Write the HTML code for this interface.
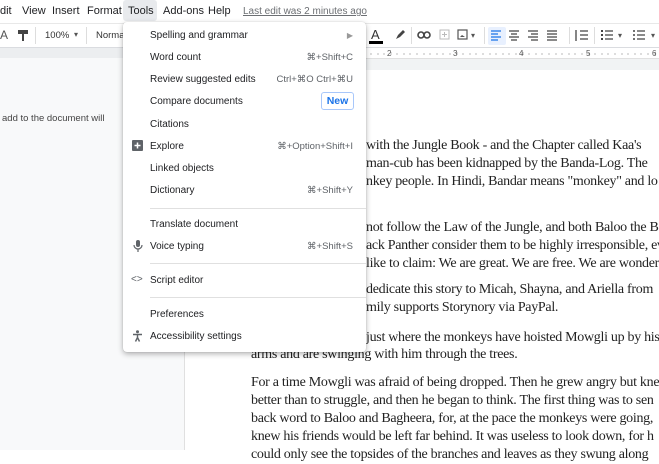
<!DOCTYPE html>
<html><head><meta charset="utf-8"><style>
*{margin:0;padding:0;box-sizing:border-box}
body{width:659px;height:450px;overflow:hidden;background:#fff;font-family:"Liberation Sans",Arial,sans-serif;position:relative;color:#202124}
.a{position:absolute;white-space:nowrap}
.mb{font-size:11px;top:5px}
#left{position:absolute;left:0;top:58px;width:185px;height:392px;background:#f8f9fa;border-right:1px solid #e0e0e0}
#tb{position:absolute;left:0;top:23px;width:659px;height:25px;background:#fff;border-top:1px solid #e8e8e8;border-bottom:1px solid #dadce0}
#band{position:absolute;left:0;top:48px;width:659px;height:10px;background:#eceef0}
#ruler{position:absolute;left:366px;top:48px;width:293px;height:11px;background:#fff;border-bottom:1px solid #e0e0e0;font-size:8px;color:#555}
#rband{position:absolute;left:366px;top:59px;width:293px;height:11px;background:#f1f3f4}
.doc{font-family:"Liberation Serif","Times New Roman",serif;font-size:14px;letter-spacing:-0.3px;color:#222;line-height:18px}
#menu{position:absolute;left:123px;top:22px;width:243px;height:330px;background:#fff;border-radius:4px;box-shadow:0 2px 6px rgba(0,0,0,.3),0 0 1px rgba(0,0,0,.2)}
.mi{position:absolute;left:27px;font-size:10px;color:#202124}
.sc{position:absolute;right:13px;font-size:9.5px;color:#5f6368}
.sep{position:absolute;left:27px;right:0;height:1px;background:#e0e0e0}
.ic{position:absolute;left:8px;color:#5f6368;font-size:11px}
</style></head><body>
<div class="a mb" style="left:0">dit</div>
<div class="a mb" style="left:22px">View</div>
<div class="a mb" style="left:52px">Insert</div>
<div class="a mb" style="left:87px">Format</div>
<div class="a" style="left:123px;top:0;width:34px;height:21px;background:#e8eaed;border-radius:3px"></div>
<div class="a mb" style="left:128px">Tools</div>
<div class="a mb" style="left:163px">Add-ons</div>
<div class="a mb" style="left:208px">Help</div>
<div class="a" style="left:243px;top:6px;font-size:10px;color:#6c6f73;text-decoration:underline">Last edit was 2 minutes ago</div>

<div id="tb"></div>
<div class="a" style="left:0;top:28px;font-size:12px;color:#555">A</div>
<svg class="a" style="left:17px;top:29px" width="12" height="13"><rect x="1" y="1" width="10" height="4" fill="#444"/><rect x="5" y="5" width="2" height="7" fill="#444"/></svg>
<div class="a" style="left:35px;top:27px;width:1px;height:17px;background:#ddd"></div>
<div class="a" style="left:45px;top:30px;font-size:9.5px;color:#333">100%</div>
<div class="a" style="left:74px;top:30px;font-size:8px;color:#555">▾</div>
<div class="a" style="left:86px;top:27px;width:1px;height:17px;background:#ddd"></div>
<div class="a" style="left:96px;top:30px;font-size:9.5px;color:#333">Normal</div>
<div id="band"></div>
<div id="left"></div>
<div class="a" style="left:2px;top:113px;font-size:9.5px;color:#444">add to the document will</div>

<div class="a" style="left:371px;top:27px;font-size:13px;color:#333">A</div>
<div class="a" style="left:369px;top:41px;width:14px;height:3px;background:#000"></div>
<svg class="a" style="left:394px;top:29px" width="12" height="12"><path d="M2 10 L4 6 L9 1 L11 3 L6 8 Z" fill="#444"/></svg>
<div class="a" style="left:411px;top:27px;width:1px;height:17px;background:#ddd"></div>
<svg class="a" style="left:417px;top:30px" width="14" height="10"><rect x="1" y="2" width="6" height="6" rx="3" fill="none" stroke="#444" stroke-width="1.6"/><rect x="7" y="2" width="6" height="6" rx="3" fill="none" stroke="#444" stroke-width="1.6"/></svg>
<svg class="a" style="left:439px;top:29px" width="11" height="11"><rect x="1" y="1" width="9" height="9" fill="none" stroke="#bbb"/><path d="M5.5 3v5M3 5.5h5" stroke="#bbb"/></svg>
<svg class="a" style="left:457px;top:29px" width="11" height="11"><rect x="1" y="1" width="9" height="9" fill="none" stroke="#555" stroke-width="1.2"/><path d="M3 8l2-2 3 2z" fill="#555"/></svg>
<div class="a" style="left:471px;top:31px;font-size:8px;color:#555">▾</div>
<div class="a" style="left:484px;top:27px;width:1px;height:17px;background:#ddd"></div>
<div class="a" style="left:488px;top:27px;width:18px;height:18px;background:#e8f0fe;border-radius:2px"></div>
<svg class="a" style="left:490px;top:29px" width="100" height="13">
<g stroke="#1a73e8" stroke-width="1.3"><path d="M1 2h10M1 5h7M1 8h10M1 11h7"/></g>
<g stroke="#444" stroke-width="1.3"><path d="M19 2h10M21 5h6M19 8h10M21 11h6"/><path d="M38 2h10M41 5h7M38 8h10M41 11h7"/><path d="M57 2h10M57 5h10M57 8h10M57 11h10"/></g></svg>
<div class="a" style="left:569px;top:27px;width:1px;height:17px;background:#ddd"></div>
<svg class="a" style="left:573px;top:29px" width="16" height="13"><g stroke="#444" stroke-width="1.3"><path d="M3 1v11M7 2h8M7 6h8M7 10h8"/></g></svg>
<div class="a" style="left:594px;top:27px;width:1px;height:17px;background:#ddd"></div>
<svg class="a" style="left:600px;top:29px" width="14" height="13"><g stroke="#444" stroke-width="1.3"><path d="M5 2h8M5 6h8M5 10h8"/></g><g fill="#444"><rect x="1" y="1" width="2" height="2"/><rect x="1" y="5" width="2" height="2"/><rect x="1" y="9" width="2" height="2"/></g></svg>
<div class="a" style="left:618px;top:31px;font-size:8px;color:#555">▾</div>
<svg class="a" style="left:632px;top:29px" width="14" height="13"><g stroke="#444" stroke-width="1.3"><path d="M5 2h8M5 6h8M5 10h8"/></g><g fill="#444"><circle cx="2" cy="2" r="1"/><circle cx="2" cy="6" r="1"/><circle cx="2" cy="10" r="1"/></g></svg>
<div class="a" style="left:651px;top:31px;font-size:8px;color:#555">▾</div>

<div id="ruler">
<svg width="293" height="11" style="position:absolute;left:0;top:0"><g stroke="#bbb">
<path d="M5 5v2M12 5v2M18 5v2M25 4v3M31 5v2M38 5v2M44 5v2M51 5v2M58 5v2M64 5v2M71 5v2M77 5v2M84 5v2M91 4v3M97 5v2M104 5v2M110 5v2M117 5v2M124 5v2M130 5v2M137 5v2M143 5v2M150 5v2M157 4v3M163 5v2M170 5v2M176 5v2M183 5v2M190 5v2M196 5v2M203 5v2M209 5v2M216 5v2M223 4v3M229 5v2M236 5v2M242 5v2M249 5v2M256 5v2M262 5v2M269 5v2M275 5v2M282 5v2M289 4v3"/></g></svg>
<span class="a" style="left:21px;top:1px">2</span><span class="a" style="left:87px;top:1px">3</span><span class="a" style="left:153px;top:1px">4</span><span class="a" style="left:220px;top:1px">5</span><span class="a" style="left:286px;top:1px">6</span>
</div>
<div id="rband"></div>

<div class="a doc" style="left:366px;top:137px">with the Jungle Book - and the Chapter called Kaa's</div>
<div class="a doc" style="left:366px;top:155px">man-cub has been kidnapped by the Banda-Log. The</div>
<div class="a doc" style="left:366px;top:173px">nkey people. In Hindi, Bandar means "monkey" and lo</div>
<div class="a doc" style="left:366px;top:219px">not follow the Law of the Jungle, and both Baloo the Be</div>
<div class="a doc" style="left:366px;top:237px">ack Panther consider them to be highly irresponsible, ev</div>
<div class="a doc" style="left:366px;top:255px">like to claim: We are great. We are free. We are wonder</div>
<div class="a doc" style="left:366px;top:281px">dedicate this story to Micah, Shayna, and Ariella from</div>
<div class="a doc" style="left:366px;top:299px">mily supports Storynory via PayPal.</div>
<div class="a doc" style="left:366px;top:329px">just where the monkeys have hoisted Mowgli up by his</div>
<div class="a doc" style="left:251px;top:346px">arms and are swinging with him through the trees.</div>
<div class="a doc" style="left:251px;top:374px">For a time Mowgli was afraid of being dropped. Then he grew angry but kne</div>
<div class="a doc" style="left:251px;top:392px">better than to struggle, and then he began to think. The first thing was to sen</div>
<div class="a doc" style="left:251px;top:410px">back word to Baloo and Bagheera, for, at the pace the monkeys were going, </div>
<div class="a doc" style="left:251px;top:428px">knew his friends would be left far behind. It was useless to look down, for h</div>
<div class="a doc" style="left:251px;top:446px">could only see the topsides of the branches and leaves as they swung along</div>

<div id="menu">
<div class="mi" style="top:8px">Spelling and grammar</div><div class="sc" style="top:9px;font-size:8px;color:#999">▶</div>
<div class="mi" style="top:30px">Word count</div><div class="sc" style="top:30px">⌘+Shift+C</div>
<div class="mi" style="top:52px">Review suggested edits</div><div class="sc" style="top:52px">Ctrl+⌘O Ctrl+⌘U</div>
<div class="mi" style="top:74px">Compare documents</div>
<div class="a" style="right:12px;top:70px;width:33px;height:18px;border:1px solid #a8c7fa;border-radius:3px;color:#1a73e8;font-size:10.5px;font-weight:bold;text-align:center;line-height:16px">New</div>
<div class="mi" style="top:97px">Citations</div>
<svg class="a" style="left:9px;top:118px" width="11" height="11"><rect width="11" height="11" rx="1" fill="#5f6368"/><path d="M5.5 2.5v6M2.5 5.5h6" stroke="#fff" stroke-width="1.5"/></svg>
<div class="mi" style="top:119px">Explore</div><div class="sc" style="top:119px">⌘+Option+Shift+I</div>
<div class="mi" style="top:141px">Linked objects</div>
<div class="mi" style="top:163px">Dictionary</div><div class="sc" style="top:163px">⌘+Shift+Y</div>
<div class="sep" style="top:186px"></div>
<div class="mi" style="top:197px">Translate document</div>
<svg class="a" style="left:10px;top:218px" width="10" height="12"><rect x="3" y="0" width="4" height="7" rx="2" fill="#5f6368"/><path d="M1 5a4 4 0 0 0 8 0M5 9v3" stroke="#5f6368" fill="none" stroke-width="1.2"/></svg>
<div class="mi" style="top:219px">Voice typing</div><div class="sc" style="top:219px">⌘+Shift+S</div>
<div class="sep" style="top:241px"></div>
<div class="ic" style="top:252px;left:8px;font-size:10px">&lt;&gt;</div>
<div class="mi" style="top:253px">Script editor</div>
<div class="sep" style="top:275px"></div>
<div class="mi" style="top:287px">Preferences</div>
<svg class="a" style="left:9px;top:308px" width="11" height="12"><circle cx="5.5" cy="1.8" r="1.5" fill="#5f6368"/><path d="M1 4.5h9M5.5 4.5v3M5.5 7.5l-2 4M5.5 7.5l2 4" stroke="#5f6368" stroke-width="1.4" fill="none"/></svg>
<div class="mi" style="top:309px">Accessibility settings</div>
</div>
</body></html>
